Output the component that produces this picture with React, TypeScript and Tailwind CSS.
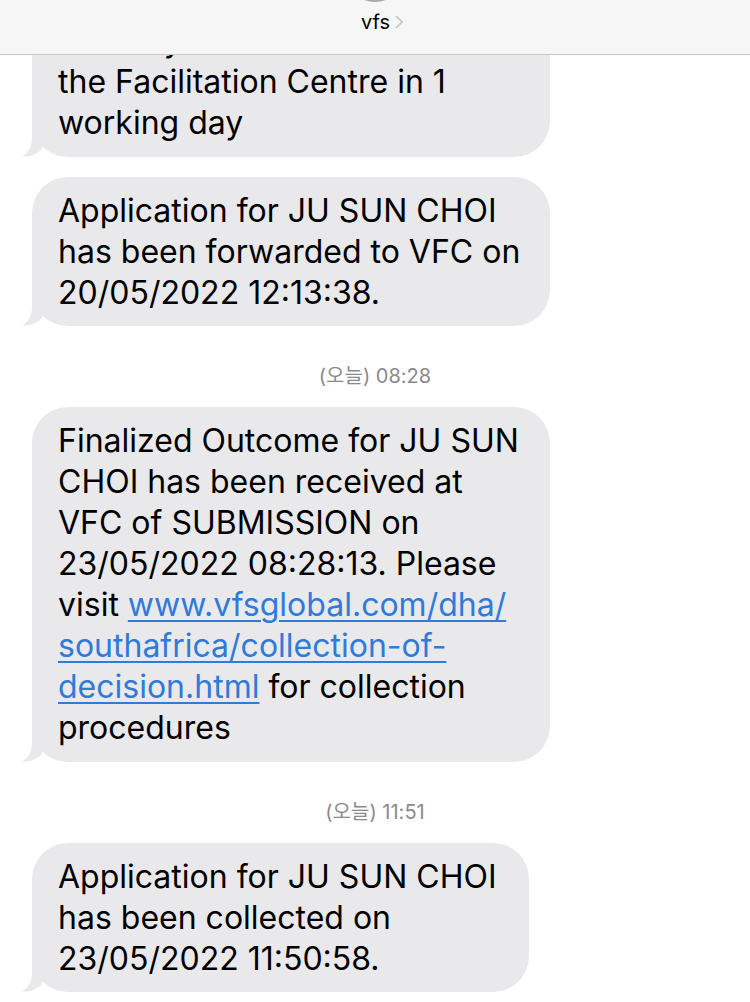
import React from "react";

const Tail = () => (
  <svg
    className="absolute left-[-10px] bottom-0 w-[30px] h-[40px]"
    viewBox="0 0 30 40"
    fill="#e9e9eb"
  >
    <path d="M10 0 L10 20 C10 30 6 36 0 39.5 C8 40 15 37.5 20 32 L30 0 Z" />
  </svg>
);

interface BubbleProps {
  width: string;
  className?: string;
  children: React.ReactNode;
}

const Bubble: React.FC<BubbleProps> = ({ width, className, children }) => (
  <div
    className={`relative ml-[32px] rounded-[36px] bg-[#e9e9eb] pl-[26px] pt-[14px] pb-[13px] text-[32px] leading-[40.9px] text-black whitespace-nowrap ${width} ${className ?? ""}`}
  >
    {children}
    <Tail />
  </div>
);

const Stamp: React.FC<{ time: string }> = ({ time }) => (
  <div className="pt-[40px] pb-[21px] text-center text-[20px] leading-[20px] text-[#8a8a8e]">
    (오늘) {time}
  </div>
);

export default function App() {
  return (
    <div className="w-[750px] h-[1002px] overflow-hidden bg-white flex flex-col font-['Inter','Noto_Sans_CJK_KR',sans-serif]">
      <header className="relative shrink-0 h-[55px] overflow-hidden bg-[#f6f6f6] border-b border-[#c8c8cb] flex items-start justify-center pt-[10px]">
        <div className="absolute top-[-58px] left-[345px] w-[60px] h-[60px] rounded-full bg-[#a9a9ae]" />
        <div className="flex items-center gap-[5px] pl-[14px] h-[24px]">
          <span className="text-[20px] leading-[24px] text-black">vfs</span>
          <svg className="w-[8px] h-[14px]" viewBox="0 0 8 14" fill="none">
            <path d="M1 1 L7 7 L1 13" stroke="#c4c4c8" strokeWidth="1.6" />
          </svg>
        </div>
      </header>

      <main className="flex-1 overflow-hidden flex flex-col">
        <Bubble width="w-[518px]" className="-mt-[48px]">
          Delivery of documents to
          <br />
          the Facilitation Centre in 1
          <br />
          working day
        </Bubble>

        <Bubble width="w-[518px]" className="mt-[20px]">
          Application for JU SUN CHOI
          <br />
          has been forwarded to VFC on
          <br />
          20/05/2022 12:13:38.
        </Bubble>

        <Stamp time="08:28" />

        <Bubble width="w-[518px]">
          Finalized Outcome for JU SUN
          <br />
          CHOI has been received at
          <br />
          VFC of SUBMISSION on
          <br />
          23/05/2022 08:28:13. Please
          <br />
          visit{" "}
          <a className="text-[#2f7bd9] underline underline-offset-[4px] decoration-[1.5px]">
            www.vfsglobal.com/dha/
            <br />
            southafrica/collection-of-
            <br />
            decision.html
          </a>{" "}
          for collection
          <br />
          procedures
        </Bubble>

        <Stamp time="11:51" />

        <Bubble width="w-[497px]">
          Application for JU SUN CHOI
          <br />
          has been collected on
          <br />
          23/05/2022 11:50:58.
        </Bubble>
      </main>
    </div>
  );
}
